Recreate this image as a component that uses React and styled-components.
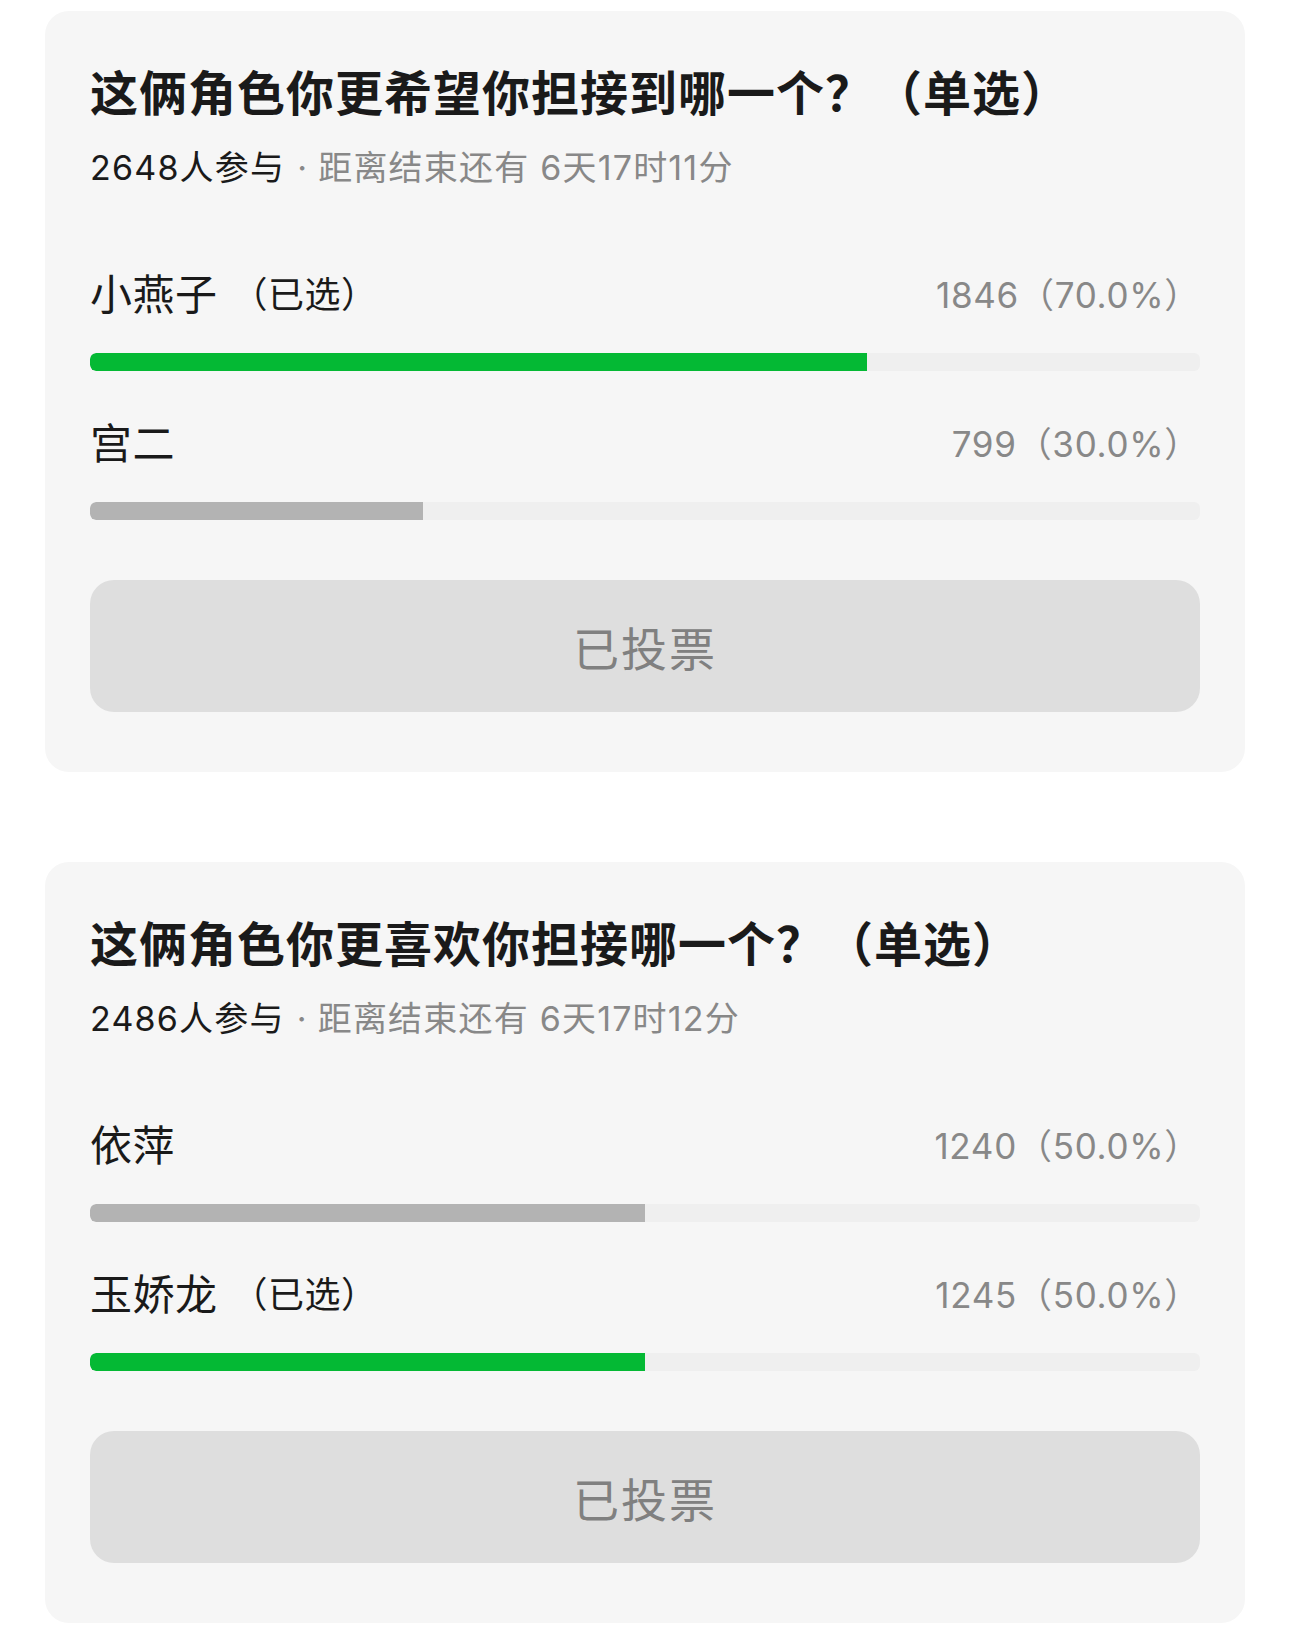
import React from "react";
import styled, { createGlobalStyle } from "styled-components";

const GlobalStyle = createGlobalStyle`
  html, body {
    margin: 0;
    padding: 0;
    background: #ffffff;
  }
  body {
    font-family: "Inter", "Noto Sans CJK SC", sans-serif;
    color: #1a1a1a;
  }
`;

const Page = styled.div`
  width: 1290px;
  box-sizing: border-box;
  padding: 11px 45px 8px;
  display: flex;
  flex-direction: column;
  gap: 90px;
`;

const Card = styled.div`
  background: #f6f6f6;
  border-radius: 24px;
  padding: 49px 45px 60px;
  display: flex;
  flex-direction: column;
`;

const Title = styled.h2`
  margin: 0;
  font-family: "Noto Sans CJK SC", sans-serif;
  font-size: 48px;
  font-weight: 700;
  line-height: 60px;
  letter-spacing: 1px;
  color: #1a1a1a;
`;

const Meta = styled.div`
  margin-top: 26px;
  font-size: 34px;
  line-height: 44px;
  letter-spacing: 1.2px;
  color: #888888;
`;

const Count = styled.span`
  color: #1a1a1a;
`;

const Dot = styled.span`
  margin: 0 10px 0 12px;
`;

const Options = styled.div`
  margin-top: 80px;
  display: flex;
  flex-direction: column;
  gap: 48px;
`;

const Option = styled.div`
  display: flex;
  flex-direction: column;
  gap: 33px;
`;

const OptionRow = styled.div`
  display: flex;
  justify-content: space-between;
  align-items: center;
  height: 50px;
`;

const Label = styled.span`
  display: flex;
  align-items: center;
  align-self: flex-start;
  margin-top: -3px;
  font-family: "Noto Sans CJK SC", sans-serif;
  font-size: 42px;
  line-height: 50px;
  letter-spacing: 0.5px;
  color: #1a1a1a;
`;

const Picked = styled.span`
  margin-left: 14px;
  font-size: 36px;
  color: #1a1a1a;
`;

const Votes = styled.span`
  font-size: 35px;
  line-height: 50px;
  letter-spacing: 0.7px;
  color: #888888;
`;

const Track = styled.div`
  height: 18px;
  border-radius: 6px;
  background: #efefef;
  overflow: hidden;
`;

const Fill = styled.div`
  height: 100%;
  border-radius: 6px 0 0 6px;
  background: ${({ $picked }) => ($picked ? "#04b934" : "#b3b3b3")};
`;

const VotedButton = styled.button`
  margin-top: 60px;
  height: 132px;
  border: none;
  border-radius: 24px;
  background: #dedede;
  font-family: "Noto Sans CJK SC", sans-serif;
  font-size: 46px;
  letter-spacing: 2px;
  color: #808080;
  cursor: default;
`;

const polls = [
  {
    title: "这俩角色你更希望你担接到哪一个？（单选）",
    people: "2648人参与",
    left: "距离结束还有 6天17时11分",
    options: [
      { name: "小燕子", picked: true, votes: 1846, pct: 70.0 },
      { name: "宫二", picked: false, votes: 799, pct: 30.0 },
    ],
  },
  {
    title: "这俩角色你更喜欢你担接哪一个？（单选）",
    people: "2486人参与",
    left: "距离结束还有 6天17时12分",
    options: [
      { name: "依萍", picked: false, votes: 1240, pct: 50.0 },
      { name: "玉娇龙", picked: true, votes: 1245, pct: 50.0 },
    ],
  },
];

function Poll({ poll }) {
  return (
    <Card>
      <Title>{poll.title}</Title>
      <Meta>
        <Count>{poll.people}</Count>
        <Dot>·</Dot>
        {poll.left}
      </Meta>
      <Options>
        {poll.options.map((opt) => (
          <Option key={opt.name}>
            <OptionRow>
              <Label>
                {opt.name}
                {opt.picked && <Picked>（已选）</Picked>}
              </Label>
              <Votes>
                {opt.votes}（{opt.pct.toFixed(1)}%）
              </Votes>
            </OptionRow>
            <Track>
              <Fill $picked={opt.picked} style={{ width: `${opt.pct}%` }} />
            </Track>
          </Option>
        ))}
      </Options>
      <VotedButton>已投票</VotedButton>
    </Card>
  );
}

export default function App() {
  return (
    <>
      <GlobalStyle />
      <Page>
        {polls.map((p) => (
          <Poll key={p.title} poll={p} />
        ))}
      </Page>
    </>
  );
}
